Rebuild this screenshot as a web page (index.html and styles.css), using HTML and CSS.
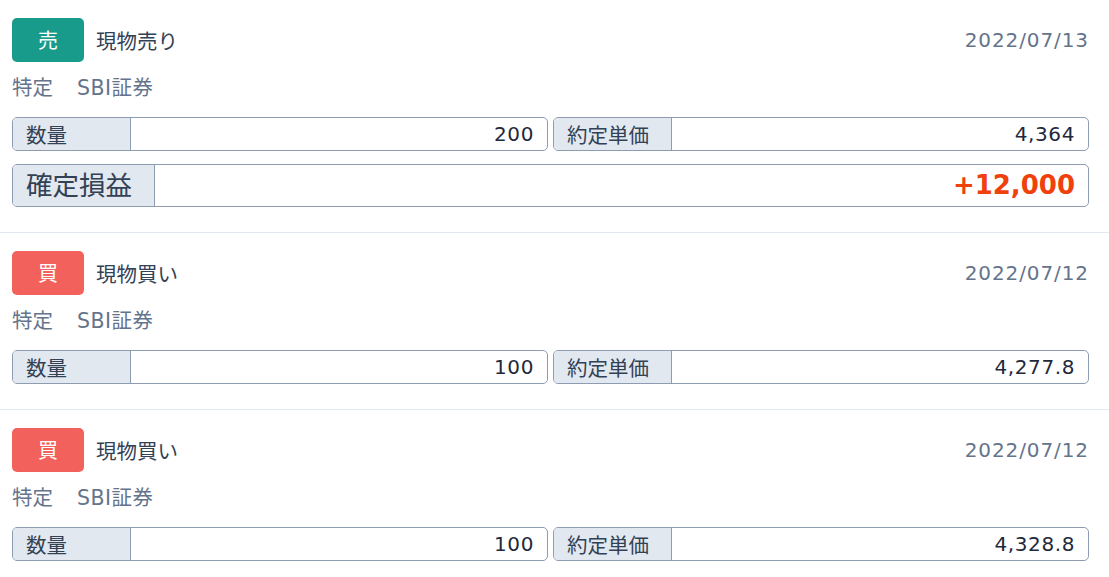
FILE: index.html
```html
<!DOCTYPE html>
<html lang="ja">
<head>
<meta charset="utf-8">
<title>取引履歴</title>
<link rel="stylesheet" href="styles.css">
</head>
<body>
<div class="list">
  <section class="trade">
    <div class="head">
      <span class="badge sell">売</span>
      <span class="title">現物売り</span>
      <span class="date">2022/07/13</span>
    </div>
    <div class="meta"><span>特定</span><span class="broker">SBI証券</span></div>
    <div class="fields">
      <div class="field"><div class="label">数量</div><div class="value">200</div></div>
      <div class="field"><div class="label">約定単価</div><div class="value">4,364</div></div>
    </div>
    <div class="field profit"><div class="label">確定損益</div><div class="value">+12,000</div></div>
  </section>
  <section class="trade">
    <div class="head">
      <span class="badge buy">買</span>
      <span class="title">現物買い</span>
      <span class="date">2022/07/12</span>
    </div>
    <div class="meta"><span>特定</span><span class="broker">SBI証券</span></div>
    <div class="fields">
      <div class="field"><div class="label">数量</div><div class="value">100</div></div>
      <div class="field"><div class="label">約定単価</div><div class="value">4,277.8</div></div>
    </div>
  </section>
  <section class="trade">
    <div class="head">
      <span class="badge buy">買</span>
      <span class="title">現物買い</span>
      <span class="date">2022/07/12</span>
    </div>
    <div class="meta"><span>特定</span><span class="broker">SBI証券</span></div>
    <div class="fields">
      <div class="field"><div class="label">数量</div><div class="value">100</div></div>
      <div class="field"><div class="label">約定単価</div><div class="value">4,328.8</div></div>
    </div>
  </section>
</div>
</body>
</html>
```
FILE: styles.css
```css
* { box-sizing: border-box; }
html, body { margin: 0; padding: 0; background: #ffffff; }
body {
  font-family: "DejaVu Sans", "Noto Sans CJK JP", sans-serif;
  color: #334155;
}
.list { width: 1109px; }
.trade {
  padding: 18px 20px 25px 12px;
  border-bottom: 1px solid #e2e8f0;
}
.head {
  display: flex;
  align-items: center;
  height: 44px;
}
.badge {
  width: 72px;
  height: 44px;
  border-radius: 5px;
  color: #ffffff;
  font-size: 20px;
  line-height: 44px;
  text-align: center;
  font-family: "Noto Sans CJK JP", sans-serif;
}
.badge.sell { background: #189b8b; }
.badge.buy { background: #f2615c; }
.title {
  margin-left: 12px;
  font-size: 20.5px;
  color: #334155;
  font-family: "Noto Sans CJK JP", sans-serif;
}
.date {
  margin-left: auto;
  font-size: 20px;
  letter-spacing: 0.9px;
  color: #64748b;
  padding-right: 0;
}
.meta {
  margin: 12px 0 15px;
  height: 28px;
  line-height: 28px;
  font-size: 20.5px;
  color: #64748b;
  display: flex;
  gap: 24px;
}
.broker { letter-spacing: 0.5px; }
.fields {
  display: grid;
  grid-template-columns: 1fr 1fr;
  gap: 5px;
}
.field {
  display: flex;
  height: 34px;
  border: 1px solid #8e9cb1;
  border-radius: 5px;
  overflow: hidden;
}
.label {
  flex: 0 0 118px;
  background: #e2e8f0;
  border-right: 1px solid #8e9cb1;
  padding-left: 13px;
  font-size: 20.5px;
  line-height: 32px;
  color: #334155;
  font-family: "Noto Sans CJK JP", sans-serif;
}
.value {
  flex: 1;
  text-align: right;
  padding-right: 13px;
  font-size: 20px;
  letter-spacing: 0.6px;
  line-height: 32px;
  color: #1e293b;
}
.profit {
  margin-top: 13px;
  height: 43px;
}
.profit .label {
  flex-basis: 142px;
  font-size: 26.5px;
  line-height: 38px;
}
.profit .value {
  font-size: 26px;
  letter-spacing: 0;
  font-weight: bold;
  line-height: 40px;
  color: #f0400c;
}
```
